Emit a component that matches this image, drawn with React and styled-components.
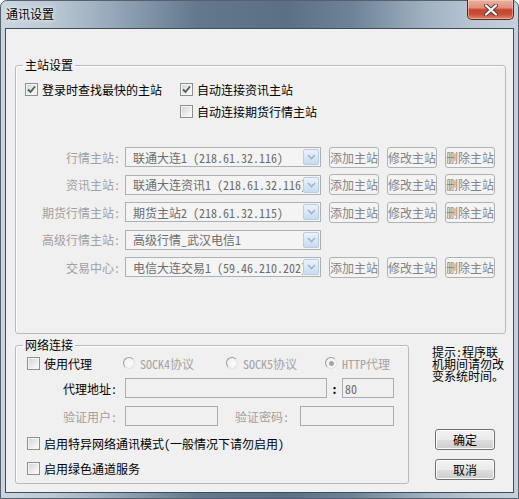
import React from "react";
import styled, { createGlobalStyle } from "styled-components";

const GlobalStyle = createGlobalStyle`
  html, body { margin: 0; padding: 0; background: #ffffff; }
  body {
    font-family: "Noto Sans CJK SC", "Noto Sans", sans-serif;
    font-size: 12px;
    color: #000;
    font-feature-settings: "hwid";
  }
  * { box-sizing: border-box; }
`;

const Window = styled.div`
  width: 519px;
  height: 499px;
  display: flex;
  flex-direction: column;
  border: 1px solid #55616d;
  border-radius: 7px 7px 0 0;
  padding: 0 4px 5px 4px;
  background: linear-gradient(
    90deg,
    #cbd6e0 0%,
    #bac8d4 10%,
    #8ea1b3 24%,
    #63788c 38%,
    #5b7084 55%,
    #6e8397 68%,
    #a0b1c1 82%,
    #bac7d3 92%,
    #c4d0db 100%
  );
`;

const TitleBar = styled.div`
  height: 27px;
  display: flex;
  align-items: flex-start;
`;

const TitleText = styled.div`
  padding-left: 1px;
  line-height: 25px;
  font-size: 12px;
  color: #000;
  text-shadow: 0 0 6px rgba(255, 255, 255, 0.9), 0 0 3px rgba(255, 255, 255, 0.8);
`;

const CloseButton = styled.div`
  margin-left: auto;
  margin-top: -1px;
  width: 47px;
  height: 20px;
  border: 1px solid #5e2a22;
  border-top: none;
  border-radius: 0 0 5px 5px;
  background: linear-gradient(
    180deg,
    #eab3a5 0%,
    #df8f7b 40%,
    #c7442d 52%,
    #c94e37 75%,
    #e0866d 100%
  );
  box-shadow: inset 0 0 0 1px rgba(255, 220, 210, 0.45);
  display: flex;
  align-items: center;
  justify-content: center;
`;

const Client = styled.div`
  flex: 1;
  border: 1px solid #3e4d5c;
  background: #f0f0f0;
  padding: 28px 7px 8px 9px;
  display: flex;
  flex-direction: column;
`;

const Group = styled.fieldset`
  margin: ${(p) => p.$mt || 0}px 0 0 0;
  width: ${(p) => (p.$w ? `${p.$w}px` : "auto")};
  border: 1px solid #b6babe;
  border-radius: 3px;
  box-shadow: inset 1px 1px 0 #ffffff;
  padding: ${(p) => p.$pt}px 0 ${(p) => p.$pb}px ${(p) => p.$pl}px;
  min-width: 0;
`;

const Legend = styled.legend`
  font-size: 12px;
  line-height: 16px;
  padding: 0 2px;
  margin-left: ${(p) => p.$ml}px;
  color: #000;
`;

const CheckGrid = styled.div`
  display: grid;
  grid-template-columns: 155px auto;
  grid-auto-rows: 22px;
  align-items: center;
`;

const CheckLabel = styled.label`
  display: flex;
  align-items: center;
  gap: ${(p) => p.$gap || 4}px;
  grid-column: ${(p) => p.$col || "auto"};
  height: 20px;
  color: ${(p) => (p.$disabled ? "#a0a0a0" : "#000")};
  white-space: nowrap;
`;

const Box = styled.span`
  flex: none;
  width: 13px;
  height: 13px;
  border: 1px solid #8e8f8f;
  background: linear-gradient(135deg, #cfd2d6 0%, #f2f2f2 70%, #fafafa 100%);
  box-shadow: inset 0 0 0 1px #f6f6f6;
  display: flex;
  align-items: center;
  justify-content: center;
`;

const Stations = styled.div`
  margin-top: 25px;
  display: flex;
  flex-direction: column;
  gap: 7.5px;
`;

const StationRow = styled.div`
  display: flex;
  align-items: center;
  height: 20px;
`;

const FieldLabel = styled.span`
  width: ${(p) => p.$w}px;
  margin-right: ${(p) => p.$mr}px;
  margin-left: ${(p) => p.$ml || 0}px;
  text-align: right;
  white-space: nowrap;
  color: ${(p) => (p.$disabled ? "#a0a0a0" : "#000")};
  flex: none;
`;

const Combo = styled.div`
  width: 196px;
  height: 20px;
  border: 1px solid #adb1b5;
  background: #f4f4f4;
  display: flex;
  align-items: center;
  padding: 0 1px 0 7px;
  flex: none;
`;

const ComboText = styled.span`
  flex: 1;
  overflow: hidden;
  white-space: nowrap;
  color: #6d6d6d;
`;

const ComboArrow = styled.span`
  flex: none;
  width: 16px;
  height: 16px;
  border: 1px solid #b9cde2;
  border-radius: 2px;
  background: linear-gradient(180deg, #eaf2fb 0%, #d9e7f6 50%, #c7dbf1 100%);
  display: flex;
  align-items: center;
  justify-content: center;
`;

const ButtonGroup = styled.div`
  display: flex;
  gap: 8px;
  margin-left: 8px;
`;

const PushButton = styled.div`
  width: ${(p) => p.$w}px;
  height: 21px;
  flex: none;
  border: 1px solid ${(p) => (p.$disabled ? "#adb2b5" : "#707070")};
  border-radius: 3px;
  background: ${(p) =>
    p.$disabled
      ? "#f4f4f4"
      : "linear-gradient(180deg, #f2f2f2 0%, #ebebeb 50%, #dddddd 51%, #cfcfcf 100%)"};
  box-shadow: ${(p) => (p.$disabled ? "none" : "inset 0 0 0 1px #fcfcfc")};
  color: ${(p) => (p.$disabled ? "#838383" : "#000")};
  display: flex;
  align-items: center;
  justify-content: center;
  white-space: nowrap;
`;

const Lower = styled.div`
  display: flex;
  margin-top: 3px;
`;

const NetRow = styled.div`
  display: flex;
  align-items: center;
  height: 20px;
  margin-top: ${(p) => p.$mt || 0}px;
`;

const Cell = styled.div`
  width: ${(p) => p.$w}px;
  flex: none;
  display: flex;
  align-items: center;
`;

const Radio = styled.span`
  flex: none;
  width: 12px;
  height: 12px;
  border-radius: 50%;
  border: 1px solid;
  border-color: #9c9c9c #e2e2e2 #e2e2e2 #9c9c9c;
  background: radial-gradient(circle at 60% 60%, #fbfbfb 0%, #ececec 100%);
  display: flex;
  align-items: center;
  justify-content: center;
`;

const RadioDot = styled.span`
  width: 5px;
  height: 5px;
  border-radius: 50%;
  background: #a5a5a5;
`;

const RadioText = styled.span`
  margin-left: 5px;
  color: #a3a3a3;
  white-space: nowrap;
`;

const TextInput = styled.div`
  width: ${(p) => p.$w}px;
  height: 20px;
  flex: none;
  border: 1px solid #abadb3;
  border-color: #abadb3 #dbdfe6 #e3e9ef #e2e3ea;
  border: 1px solid #a9acb0;
  background: #f0f0f0;
  padding-left: 2px;
  display: flex;
  align-items: center;
  color: #6d6d6d;
`;

const Colon = styled.span`
  width: 15px;
  flex: none;
  text-align: center;
  font-weight: bold;
`;

const Side = styled.div`
  flex: 1;
  display: flex;
  flex-direction: column;
  padding: 9px 0 4px 0;
`;

const Hint = styled.div`
  margin-left: 23px;
  width: 74px;
  line-height: 12px;
  font-size: 12px;
  color: #000;
`;

const SideButtons = styled.div`
  margin-top: auto;
  margin-left: 26px;
  display: flex;
  flex-direction: column;
  gap: 9px;
`;

const Check = () => (
  <svg width="11" height="11" viewBox="0 0 11 11">
    <path d="M2 5.5 L4.5 8 L9 2.5" fill="none" stroke="#4b5f4b" strokeWidth="1.8" />
  </svg>
);

const CheckBox = ({ checked, children, col, disabled }) => (
  <CheckLabel $col={col} $disabled={disabled} $gap={checked !== undefined ? 4 : 4}>
    <Box>{checked && <Check />}</Box>
    <span>{children}</span>
  </CheckLabel>
);

const Chevron = () => (
  <svg width="9" height="6" viewBox="0 0 9 6">
    <path d="M1 1 L4.5 4.5 L8 1" fill="none" stroke="#9fb3c9" strokeWidth="1.6" />
  </svg>
);

const stations = [
  { label: "行情主站:", value: "联通大连1 (218.61.32.116)", buttons: true },
  { label: "资讯主站:", value: "联通大连资讯1 (218.61.32.116)", buttons: true },
  { label: "期货行情主站:", value: "期货主站2 (218.61.32.115)", buttons: true },
  { label: "高级行情主站:", value: "高级行情_武汉电信1", buttons: false },
  { label: "交易中心:", value: "电信大连交易1 (59.46.210.202)", buttons: true },
];

export default function App() {
  return (
    <>
      <GlobalStyle />
      <Window>
        <TitleBar>
          <TitleText>通讯设置</TitleText>
          <CloseButton>
            <svg width="14" height="12" viewBox="0 0 14 12">
              <path d="M2 1.5 L12 10.5 M12 1.5 L2 10.5" stroke="#5a3a35" strokeWidth="4" strokeLinecap="round" />
              <path d="M2 1.5 L12 10.5 M12 1.5 L2 10.5" stroke="#ffffff" strokeWidth="2.2" strokeLinecap="round" />
            </svg>
          </CloseButton>
        </TitleBar>
        <Client>
          <Group $pt={5} $pb={56} $pl={9}>
            <Legend $ml={-2}>主站设置</Legend>
            <CheckGrid>
              <CheckBox checked>登录时查找最快的主站</CheckBox>
              <CheckBox checked>自动连接资讯主站</CheckBox>
              <CheckBox col="2">自动连接期货行情主站</CheckBox>
            </CheckGrid>
            <Stations>
              {stations.map((s) => (
                <StationRow key={s.label}>
                  <FieldLabel $w={95} $mr={5} $disabled>
                    {s.label}
                  </FieldLabel>
                  <Combo>
                    <ComboText>{s.value}</ComboText>
                    <ComboArrow>
                      <Chevron />
                    </ComboArrow>
                  </Combo>
                  {s.buttons && (
                    <ButtonGroup>
                      <PushButton $w={50} $disabled>添加主站</PushButton>
                      <PushButton $w={50} $disabled>修改主站</PushButton>
                      <PushButton $w={50} $disabled>删除主站</PushButton>
                    </ButtonGroup>
                  )}
                </StationRow>
              ))}
            </Stations>
          </Group>
          <Lower>
            <Group $w={394} $pt={0} $pb={5} $pl={11}>
              <Legend $ml={-4}>网络连接</Legend>
              <NetRow>
                <Cell $w={96}>
                  <CheckBox>使用代理</CheckBox>
                </Cell>
                <Cell $w={103}>
                  <Radio />
                  <RadioText>SOCK4协议</RadioText>
                </Cell>
                <Cell $w={99}>
                  <Radio />
                  <RadioText>SOCK5协议</RadioText>
                </Cell>
                <Cell $w={80}>
                  <Radio>
                    <RadioDot />
                  </Radio>
                  <RadioText>HTTP代理</RadioText>
                </Cell>
              </NetRow>
              <NetRow $mt={5}>
                <FieldLabel $w={90} $mr={8}>代理地址:</FieldLabel>
                <TextInput $w={202} />
                <Colon>:</Colon>
                <TextInput $w={52}>80</TextInput>
              </NetRow>
              <NetRow $mt={8}>
                <FieldLabel $w={90} $mr={8} $disabled>验证用户:</FieldLabel>
                <TextInput $w={93} />
                <FieldLabel $w={55} $ml={16} $mr={11} $disabled>验证密码:</FieldLabel>
                <TextInput $w={94} />
              </NetRow>
              <NetRow $mt={7}>
                <CheckBox>启用特异网络通讯模式(一般情况下请勿启用)</CheckBox>
              </NetRow>
              <NetRow $mt={5}>
                <CheckBox>启用绿色通道服务</CheckBox>
              </NetRow>
            </Group>
            <Side>
              <Hint>提示:程序联机期间请勿改变系统时间。</Hint>
              <SideButtons>
                <PushButton $w={60}>确定</PushButton>
                <PushButton $w={60}>取消</PushButton>
              </SideButtons>
            </Side>
          </Lower>
        </Client>
      </Window>
    </>
  );
}
